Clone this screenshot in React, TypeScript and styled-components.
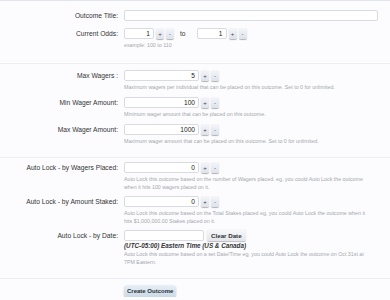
import React from 'react';
import styled, { createGlobalStyle } from 'styled-components';

const GlobalStyle = createGlobalStyle`
body {
  margin: 0;
  background: #fcfcfe;
  font-family: "Liberation Sans", Arial, sans-serif;
}
`

const Page = styled.div`
width: 390px;
border-top: 1px solid #e2e4ec;
`

const Section = styled.div<{ $top: number; $bottom: number; $gap: number }>`
display: flex;
flex-direction: column;
gap: ${p => p.$gap}px;
padding: ${p => p.$top}px 0 ${p => p.$bottom}px;
border-bottom: 1px solid #eceef3;
`

const Row = styled.div`
display: flex;
align-items: flex-start;
`

const Label = styled.div`
width: 118px;
flex: none;
text-align: right;
font-size: 6.7px;
line-height: 11px;
color: #333;
`

const Controls = styled.div`
margin-left: 6px;
display: flex;
flex-direction: column;
`

const Line = styled.div`
display: flex;
align-items: center;
gap: 2px;
`

const Input = styled.div<{ $w: number }>`
box-sizing: border-box;
width: ${p => p.$w}px;
height: 11px;
background: #fff;
border: 1px solid #d8dbe2;
border-radius: 2px;
font-size: 6.6px;
line-height: 9px;
text-align: right;
padding-right: 3px;
color: #222;
`

const Spin = styled.div`
box-sizing: border-box;
width: 8px;
height: 10px;
border-radius: 2px;
background: linear-gradient(#f2f4f9, #dde2eb);
box-shadow: 0 0.5px 1px rgba(0, 0, 0, 0.3);
font-size: 6px;
line-height: 10px;
text-align: center;
color: #444;
`

const To = styled.span`
font-size: 6.6px;
color: #333;
margin: 0 9px 0 4px;
`

const Hint = styled.div<{ $w?: number; $top?: number }>`
margin-top: ${p => p.$top ?? 2}px;
font-size: 5.3px;
line-height: 8px;
color: #a4a7ad;
max-width: ${p => p.$w ?? 260}px;
`

const Zone = styled.div`
font-size: 6.3px;
line-height: 9px;
font-weight: bold;
font-style: italic;
color: #333;
`

const ClearButton = styled.div`
margin-left: 1px;
height: 11px;
padding: 0 4px;
border-radius: 2px;
background: linear-gradient(#f6f7f9, #e4e6eb);
box-shadow: 0 0.5px 1px rgba(0, 0, 0, 0.25);
font-size: 6.2px;
line-height: 11px;
font-weight: bold;
color: #333;
`

const Footer = styled.div`
display: flex;
padding: 6px 0 0 124px;
`

const Submit = styled.div`
height: 12px;
padding: 0 3px;
border-radius: 3px;
background: linear-gradient(#e8f0f6, #c9d9e6);
box-shadow: 0 1px 1.5px rgba(0, 0, 0, 0.3);
font-size: 6px;
line-height: 12px;
font-weight: bold;
color: #2a2f36;
`

function Spinner({ value, width }: { value: string; width: number }) {
  return (
    <Line>
      <Input $w={width}>{value}</Input>
      <Spin>+</Spin>
      <Spin>-</Spin>
    </Line>
  );
}

export default function App() {
  return (
    <Page>
      <GlobalStyle />
      <Section $top={9} $bottom={14} $gap={7}>
        <Row>
          <Label>Outcome Title:</Label>
          <Controls>
            <Input $w={254} />
          </Controls>
        </Row>
        <Row>
          <Label>Current Odds:</Label>
          <Controls>
            <Line>
              <Spinner value="1" width={30} />
              <To>to</To>
              <Spinner value="1" width={30} />
            </Line>
            <Hint>example: 100 to 110</Hint>
          </Controls>
        </Row>
      </Section>

      <Section $top={6} $bottom={12} $gap={6}>
        <Row>
          <Label>Max Wagers :</Label>
          <Controls>
            <Spinner value="5" width={75} />
            <Hint>Maximum wagers per individual that can be placed on this outcome. Set to 0 for unlimited.</Hint>
          </Controls>
        </Row>
        <Row>
          <Label>Min Wager Amount:</Label>
          <Controls>
            <Spinner value="100" width={75} />
            <Hint>Minimum wager amount that can be placed on this outcome.</Hint>
          </Controls>
        </Row>
        <Row>
          <Label>Max Wager Amount:</Label>
          <Controls>
            <Spinner value="1000" width={75} />
            <Hint>Maximum wager amount that can be placed on this outcome. Set to 0 for unlimited.</Hint>
          </Controls>
        </Row>
      </Section>

      <Section $top={4} $bottom={12} $gap={5}>
        <Row>
          <Label>Auto Lock - by Wagers Placed:</Label>
          <Controls>
            <Spinner value="0" width={75} />
            <Hint $w={250}>Auto Lock this outcome based on the number of Wagers placed. eg, you could Auto Lock the outcome when it hits 100 wagers placed on it.</Hint>
          </Controls>
        </Row>
        <Row>
          <Label>Auto Lock - by Amount Staked:</Label>
          <Controls>
            <Spinner value="0" width={75} />
            <Hint $w={250}>Auto Lock this outcome based on the Total Stakes placed eg, you could Auto Lock the outcome when it hits $1,000,000.00 Stakes placed on it.</Hint>
          </Controls>
        </Row>
        <Row>
          <Label>Auto Lock - by Date:</Label>
          <Controls>
            <Line>
              <Input $w={80} />
              <ClearButton>Clear Date</ClearButton>
            </Line>
            <Zone>(UTC-05:00) Eastern Time (US &amp; Canada)</Zone>
            <Hint $w={250} $top={0}>Auto Lock this outcome based on a set Date/Time eg, you could Auto Lock the outcome on Oct 31st at 7PM Eastern.</Hint>
          </Controls>
        </Row>
      </Section>

      <Footer>
        <Submit>Create Outcome</Submit>
      </Footer>
    </Page>
  );
}
